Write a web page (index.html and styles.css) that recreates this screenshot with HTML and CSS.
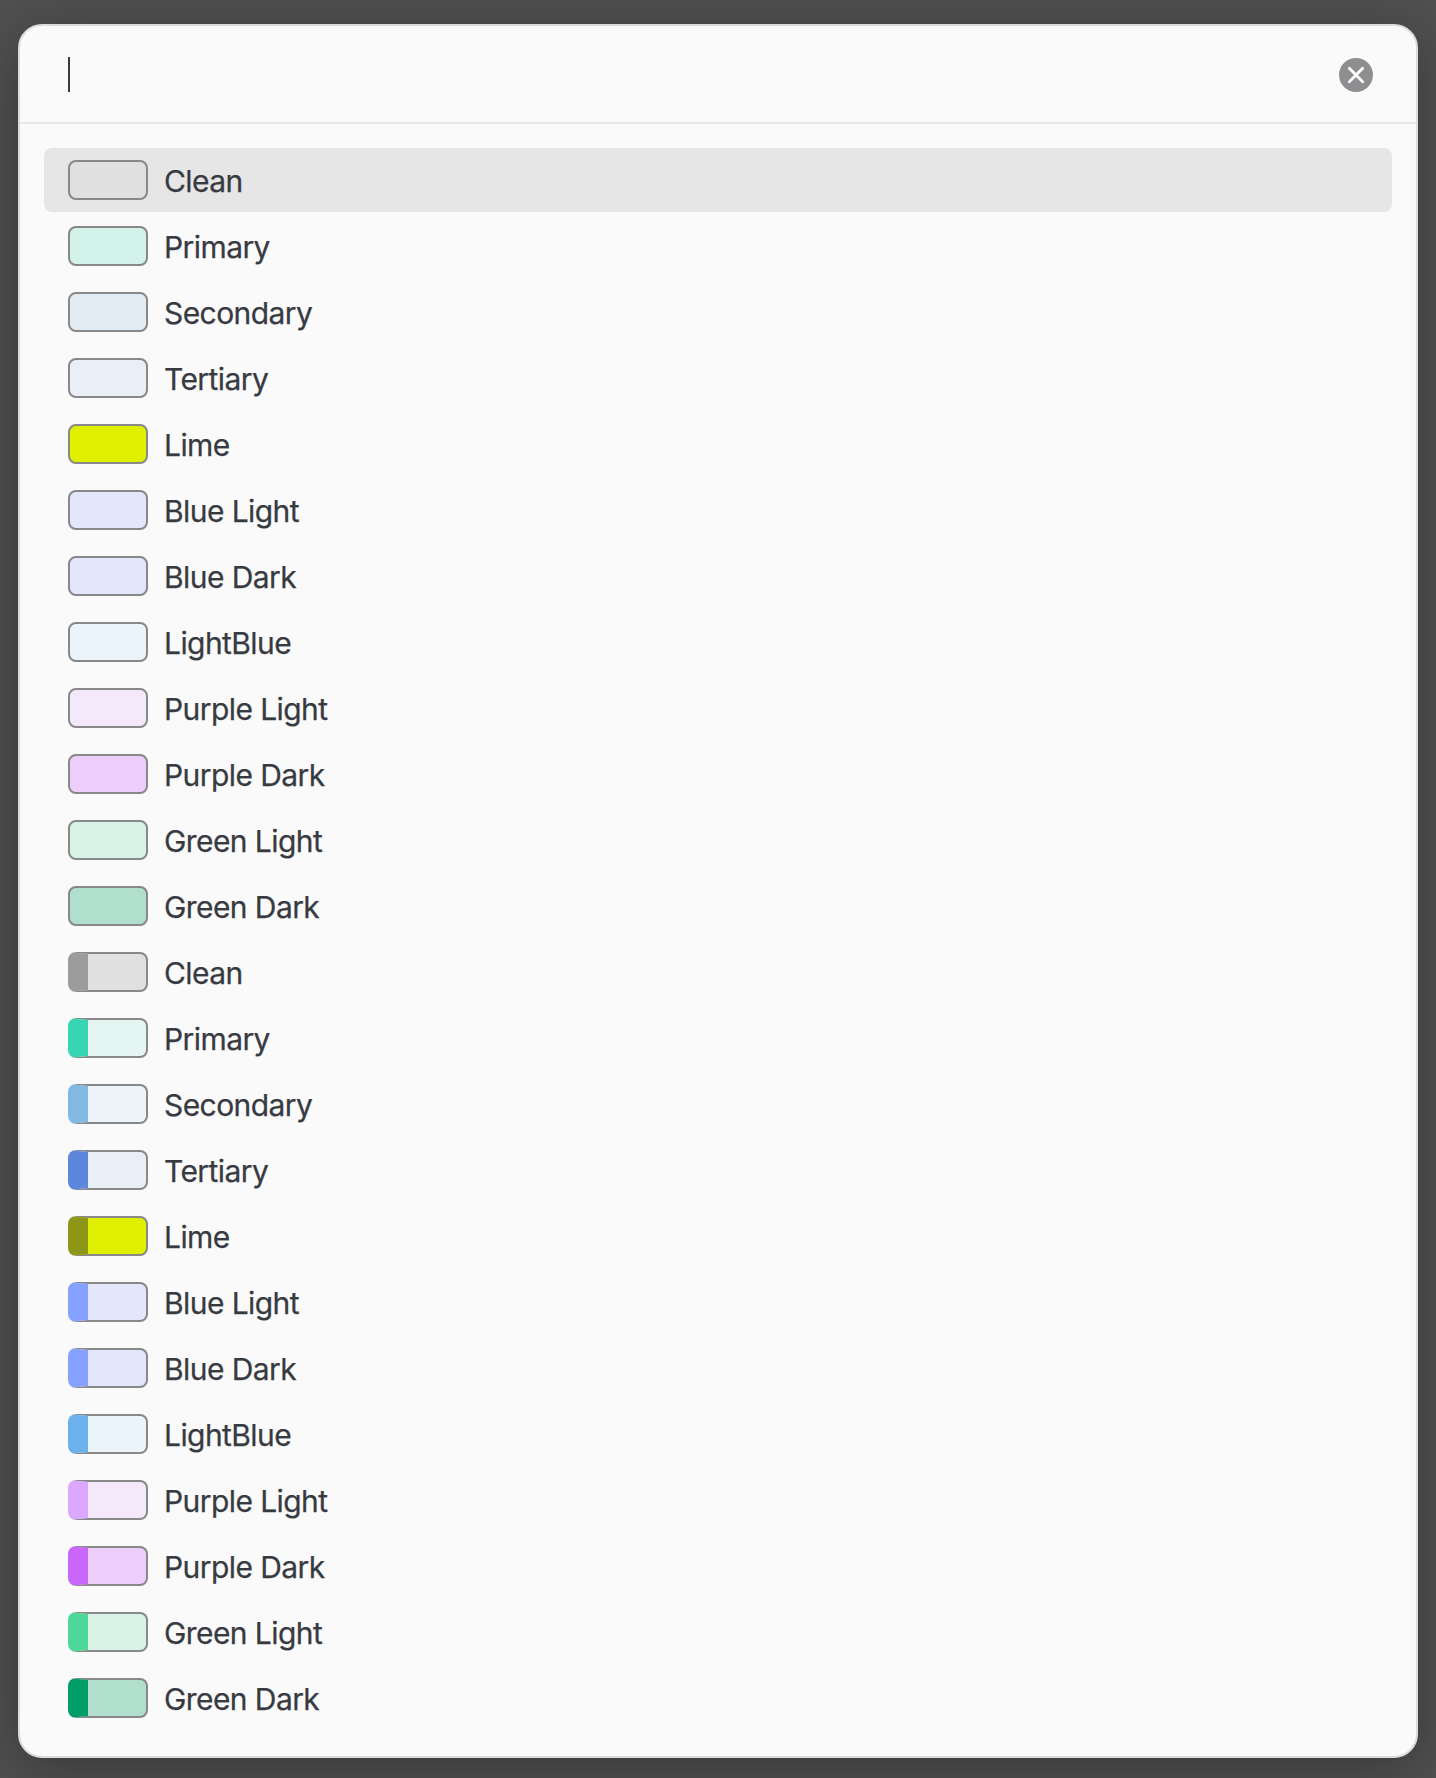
FILE: index.html
```
<!DOCTYPE html>
<html lang="en">
<head>
<meta charset="utf-8">
<title>Styles</title>
<link rel="stylesheet" href="styles.css">
</head>
<body>
<main class="panel">
  <header class="search">
    <span class="caret"></span>
    <svg class="clear" viewBox="0 0 34 34" width="34" height="34"><circle cx="17" cy="17" r="17" fill="#8e8e90"/><path d="M10.3 10.3l13.4 13.4M23.7 10.3L10.3 23.7" stroke="#fff" stroke-width="2.8" stroke-linecap="round"/></svg>
  </header>
  <ul class="list">
    <li class="item selected"><span class="swatch clean"></span><span class="label">Clean</span></li>
    <li class="item"><span class="swatch primary"></span><span class="label">Primary</span></li>
    <li class="item"><span class="swatch secondary"></span><span class="label">Secondary</span></li>
    <li class="item"><span class="swatch tertiary"></span><span class="label">Tertiary</span></li>
    <li class="item"><span class="swatch lime"></span><span class="label">Lime</span></li>
    <li class="item"><span class="swatch blue-light"></span><span class="label">Blue Light</span></li>
    <li class="item"><span class="swatch blue-dark"></span><span class="label">Blue Dark</span></li>
    <li class="item"><span class="swatch lightblue"></span><span class="label">LightBlue</span></li>
    <li class="item"><span class="swatch purple-light"></span><span class="label">Purple Light</span></li>
    <li class="item"><span class="swatch purple-dark"></span><span class="label">Purple Dark</span></li>
    <li class="item"><span class="swatch green-light"></span><span class="label">Green Light</span></li>
    <li class="item"><span class="swatch green-dark"></span><span class="label">Green Dark</span></li>
    <li class="item"><span class="swatch bar clean"></span><span class="label">Clean</span></li>
    <li class="item"><span class="swatch bar primary"></span><span class="label">Primary</span></li>
    <li class="item"><span class="swatch bar secondary"></span><span class="label">Secondary</span></li>
    <li class="item"><span class="swatch bar tertiary"></span><span class="label">Tertiary</span></li>
    <li class="item"><span class="swatch bar lime"></span><span class="label">Lime</span></li>
    <li class="item"><span class="swatch bar blue-light"></span><span class="label">Blue Light</span></li>
    <li class="item"><span class="swatch bar blue-dark"></span><span class="label">Blue Dark</span></li>
    <li class="item"><span class="swatch bar lightblue"></span><span class="label">LightBlue</span></li>
    <li class="item"><span class="swatch bar purple-light"></span><span class="label">Purple Light</span></li>
    <li class="item"><span class="swatch bar purple-dark"></span><span class="label">Purple Dark</span></li>
    <li class="item"><span class="swatch bar green-light"></span><span class="label">Green Light</span></li>
    <li class="item"><span class="swatch bar green-dark"></span><span class="label">Green Dark</span></li>
  </ul>
</main>
</body>
</html>
```
FILE: styles.css
```
* { box-sizing: border-box; }
body {
  margin: 0;
  height: 1778px;
  padding: 24px 18px 20px;
  overflow: hidden;
  background: #505050;
  color: #383a42;
  font: 400 30px/40px Inter, "Liberation Sans", sans-serif;
}
.panel {
  height: 1734px;
  border: 2px solid #dcdcdc;
  border-radius: 24px;
  background: #fafafa;
  box-shadow: 0 12px 60px rgba(0, 0, 0, 0.3);
}
.search {
  display: flex;
  align-items: center;
  justify-content: space-between;
  height: 98px;
  padding: 0 43px 0 48px;
  border-bottom: 2px solid #e8e8e8;
}
.caret { width: 2px; height: 35px; background: #383a42; }
.clear { margin-top: 2px; }
.list {
  display: flex;
  flex-direction: column;
  gap: 2px;
  margin: 0;
  padding: 24px;
  list-style: none;
}
.item {
  display: flex;
  align-items: center;
  gap: 16px;
  height: 64px;
  padding: 0 24px;
  border-radius: 8px;
}
.selected { background: #e6e6e6; }
.label {
  padding-top: 1px;
  letter-spacing: -0.58px;
  white-space: nowrap;
  -webkit-text-stroke: 0.25px #383a42;
}
.swatch {
  width: 80px;
  height: 40px;
  border: 2px solid #888;
  border-radius: 8px;
}
.bar { border-left-width: 20px; }
.clean { background: #e0e0e0; }
.primary { background: #d3f2ea; }
.secondary { background: #e1ecf5; }
.tertiary { background: #e9eef7; }
.lime { background: #e1f000; }
.blue-light, .blue-dark { background: #e2e7fb; }
.lightblue { background: #ebf3fb; }
.purple-light { background: #f4e9fb; }
.purple-dark { background: #edcdf9; }
.green-light { background: #d8f3e6; }
.green-dark { background: #b0dfce; }
.bar.clean { border-left-color: #9c9c9c; }
.bar.primary { background: #e5f5f2; border-left-color: #36d6b5; }
.bar.secondary { background: #edf4f9; border-left-color: #82b9e3; }
.bar.tertiary { border-left-color: #5c87dd; }
.bar.lime { border-left-color: #8e9617; }
.bar.blue-light, .bar.blue-dark { border-left-color: #86a2ff; }
.bar.lightblue { border-left-color: #6bb2ed; }
.bar.purple-light { border-left-color: #dca8ff; }
.bar.purple-dark { border-left-color: #cb66fc; }
.bar.green-light { border-left-color: #4dd798; }
.bar.green-dark { border-left-color: #009c6a; }
```
